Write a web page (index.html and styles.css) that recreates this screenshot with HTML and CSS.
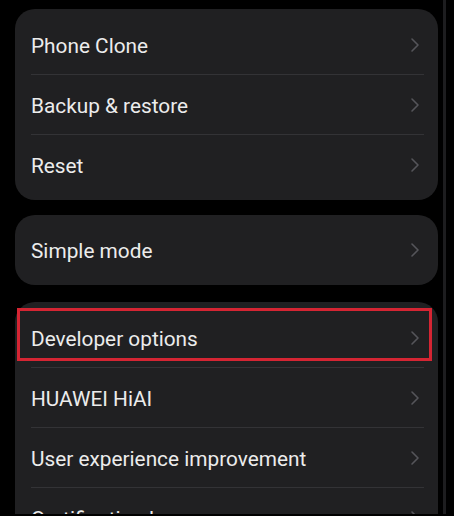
FILE: index.html
```html
<!DOCTYPE html>
<html>
<head>
<meta charset="utf-8">
<link rel="stylesheet" href="styles.css">
</head>
<body>
<div class="screen">
  <div class="content">
    <div class="card card-list">
      <div class="row"><span class="label">Phone Clone</span><svg class="chev" viewBox="0 0 10 16"><path d="M2 2 L8 8 L2 14"/></svg></div>
      <div class="sep"></div>
      <div class="row"><span class="label">Backup &amp; restore</span><svg class="chev" viewBox="0 0 10 16"><path d="M2 2 L8 8 L2 14"/></svg></div>
      <div class="sep"></div>
      <div class="row"><span class="label">Reset</span><svg class="chev" viewBox="0 0 10 16"><path d="M2 2 L8 8 L2 14"/></svg></div>
    </div>
    <div class="card card-single">
      <div class="row"><span class="label">Simple mode</span><svg class="chev" viewBox="0 0 10 16"><path d="M2 2 L8 8 L2 14"/></svg></div>
    </div>
    <div class="card card-list card-open">
      <div class="row"><span class="label">Developer options</span><svg class="chev" viewBox="0 0 10 16"><path d="M2 2 L8 8 L2 14"/></svg><div class="redbox"></div></div>
      <div class="sep"></div>
      <div class="row"><span class="label">HUAWEI HiAI</span><svg class="chev" viewBox="0 0 10 16"><path d="M2 2 L8 8 L2 14"/></svg></div>
      <div class="sep"></div>
      <div class="row"><span class="label">User experience improvement</span><svg class="chev" viewBox="0 0 10 16"><path d="M2 2 L8 8 L2 14"/></svg></div>
      <div class="sep"></div>
      <div class="row"><span class="label">Certification logos</span><svg class="chev" viewBox="0 0 10 16"><path d="M2 2 L8 8 L2 14"/></svg></div>
    </div>
  </div>
  <div class="scrollbar"></div>
</div>
</body>
</html>
```

FILE: styles.css
```css
html, body {
  margin: 0;
  padding: 0;
  background: #000;
  height: 516px;
  overflow: hidden;
}
.screen {
  display: flex;
  height: 514px;
  overflow: hidden;
  font-family: Roboto, "Noto Sans", sans-serif;
}
.content {
  width: 423px;
  margin-left: 15px;
  padding-top: 9px;
  display: flex;
  flex-direction: column;
}
.scrollbar {
  width: 3px;
  margin-left: 5px;
  background: #1d1d1f;
  height: 514px;
}
.card {
  background: #202022;
  border-radius: 20px;
  flex-shrink: 0;
}
.card-list {
  padding: 6px 0 5px;
}
.card-single {
  margin-top: 15px;
  padding: 5px 0 5px;
}
.card-open {
  margin-top: 17px;
  border-bottom-left-radius: 0;
  border-bottom-right-radius: 0;
}
.row {
  position: relative;
  height: 60px;
  display: flex;
  align-items: center;
  justify-content: space-between;
  padding: 0 18px 0 16px;
}
.sep {
  height: 1px;
  margin: -1px 14px 0 16px;
  background: #333336;
  position: relative;
}
.label {
  color: #ececec;
  font-size: 20.8px;
  padding-top: 1px;
}
.chev {
  width: 10px;
  height: 16px;
  fill: none;
  stroke: #55555a;
  stroke-width: 1.6;
  stroke-linecap: round;
  stroke-linejoin: round;
}
.redbox {
  position: absolute;
  left: 2px;
  top: 0;
  width: 409px;
  height: 47px;
  border: 3px solid #d52533;
  pointer-events: none;
}
```
